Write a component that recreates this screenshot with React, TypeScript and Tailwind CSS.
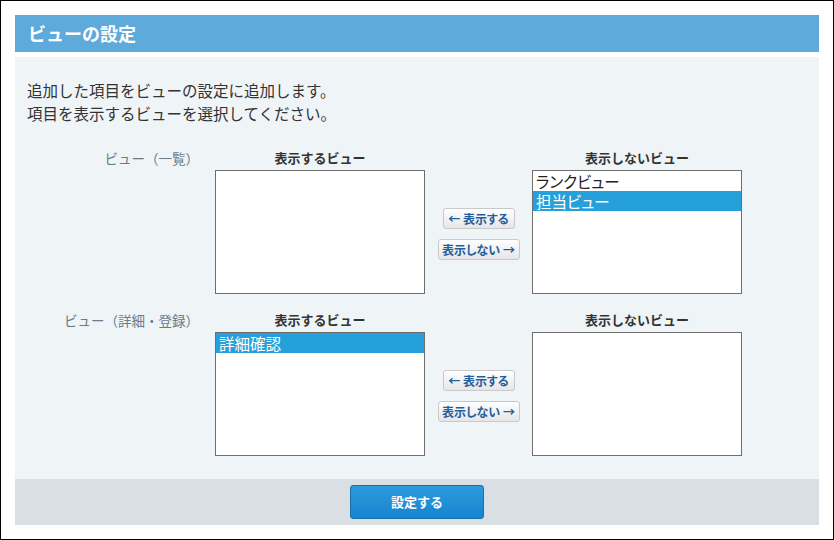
import React from "react";

const font = "font-['Noto_Sans_CJK_JP','Noto_Sans',sans-serif]";

const ListBox = ({ items, selected }: { items: string[]; selected?: string }) => (
  <div className="h-[124px] border border-[#6e6e6e] bg-white">
    {items.map((it) => (
      <div
        key={it}
        className={
          "h-[20px] pl-[3px] text-[15.5px] leading-[20px] [font-feature-settings:'palt'] " +
          (it === selected ? "bg-[#26a0da] text-white" : "text-[#222]")
        }
      >
        {it}
      </div>
    ))}
  </div>
);

const MoveButton = ({ label, w }: { label: string; w: string }) => (
  <button
    className={
      "h-[21px] rounded-[3px] border border-[#c9c9c9] bg-gradient-to-b from-white to-[#e6e6e6] text-[12px] font-bold leading-[19px] text-[#1f5f9e] [font-feature-settings:'palt'] " +
      w
    }
  >
    {label}
  </button>
);

const Section = ({
  label,
  left,
  leftSel,
  right,
  rightSel,
}: {
  label: string;
  left: string[];
  leftSel?: string;
  right: string[];
  rightSel?: string;
}) => (
  <div className="grid grid-cols-[200px_210px_107px_210px] grid-rows-[16px_124px] gap-y-[4px]">
    <div className="pr-[16px] text-right text-[13.5px] leading-[16px] text-[#6a7b8c]">{label}</div>
    <div className="text-center text-[13px] font-bold leading-[16px] text-[#333]">表示するビュー</div>
    <div />
    <div className="text-center text-[13px] font-bold leading-[16px] text-[#333]">表示しないビュー</div>
    <div />
    <ListBox items={left} selected={leftSel} />
    <div className="flex flex-col items-center justify-center gap-[10px] pt-[4px]">
      <MoveButton label="← 表示する" w="w-[72px]" />
      <MoveButton label="表示しない →" w="w-[82px]" />
    </div>
    <ListBox items={right} selected={rightSel} />
  </div>
);

export default function App() {
  return (
    <div className={"h-[540px] w-[834px] border border-black bg-white pl-[14px] pt-[14px] " + font}>
      <div className="w-[804px]">
        <div className="flex h-[37px] items-center bg-[#5eaadb] pl-[13px] text-[18px] font-bold text-white">
          ビューの設定
        </div>
        <div className="mt-[5px] h-[422px] bg-[#eff4f7] pt-[22px]">
          <div className="pl-[12px] text-[15.5px] leading-[23px] text-[#333]">
            <p>追加した項目をビューの設定に追加します。</p>
            <p>項目を表示するビューを選択してください。</p>
          </div>
          <div className="mt-[25px] flex flex-col gap-[18px]">
            <Section label="ビュー（一覧）" left={[]} right={["ランクビュー", "担当ビュー"]} rightSel="担当ビュー" />
            <Section label="ビュー（詳細・登録）" left={["詳細確認"]} leftSel="詳細確認" right={[]} />
          </div>
        </div>
        <div className="flex h-[46px] items-center justify-center bg-[#dadfe3]">
          <button className="h-[34px] w-[134px] rounded-[3px] border border-[#1a6eaa] bg-gradient-to-b from-[#2e99dc] to-[#1485d0] text-[13px] font-bold text-white">
            設定する
          </button>
        </div>
      </div>
    </div>
  );
}
